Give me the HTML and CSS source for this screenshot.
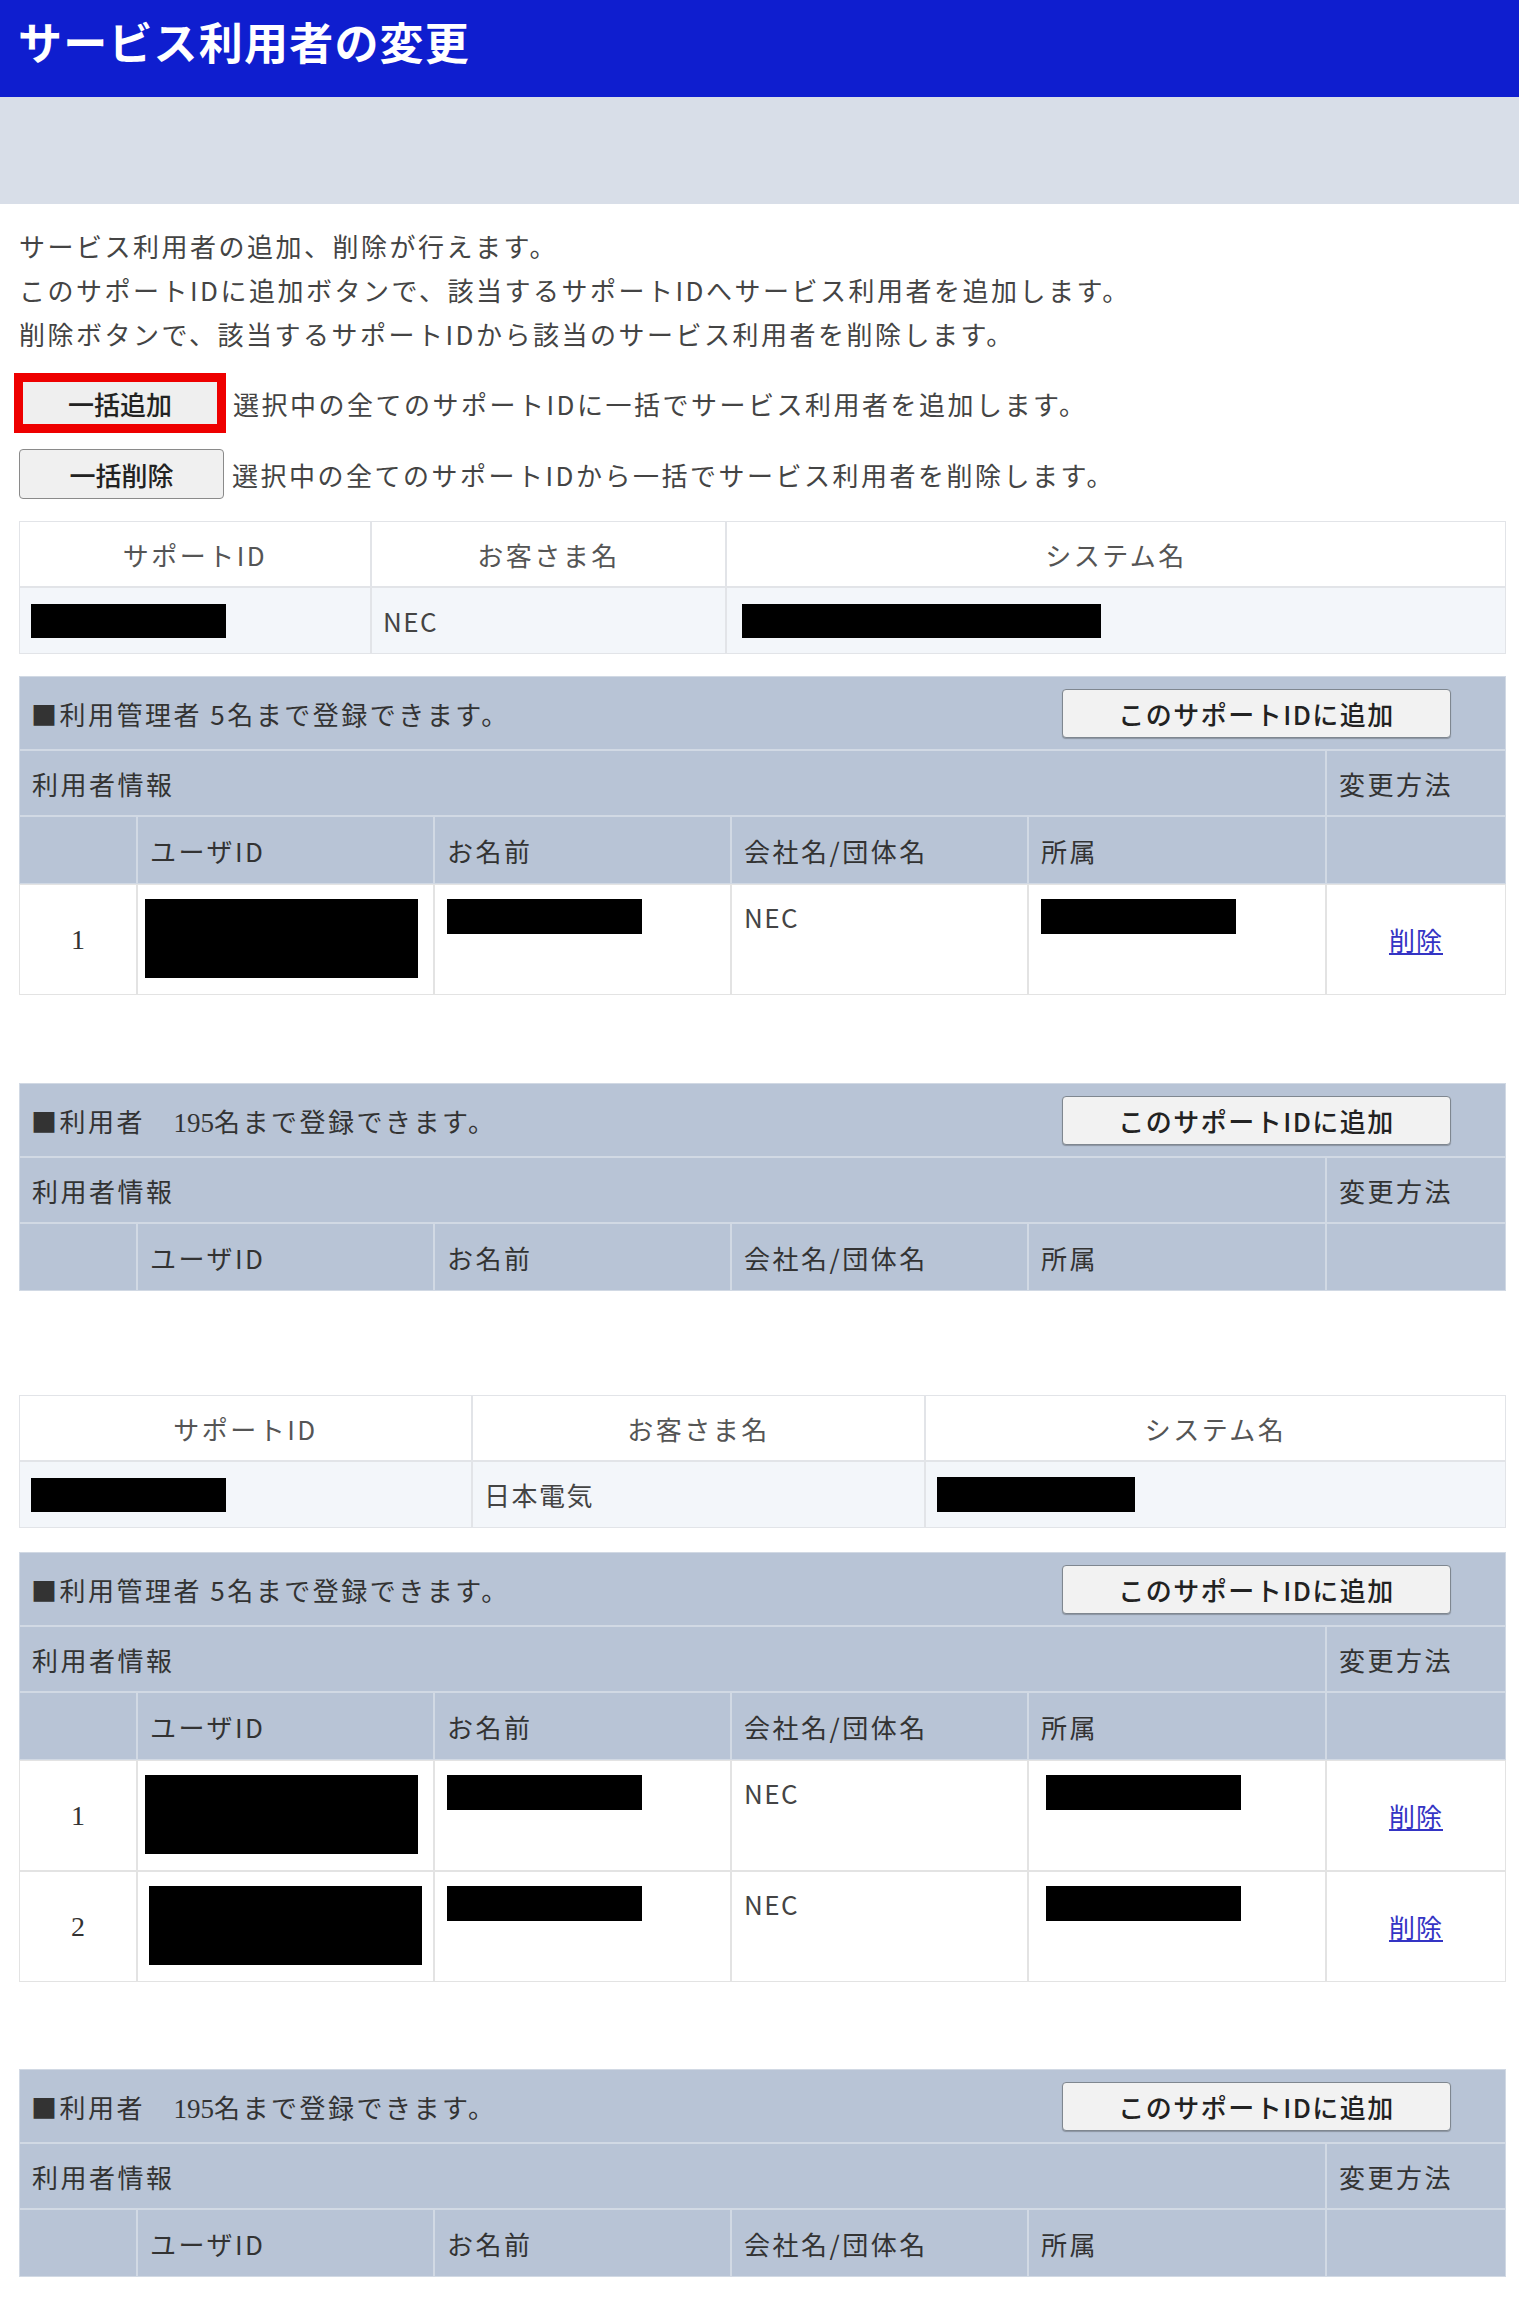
FILE: index.html
```html
<!DOCTYPE html>
<html lang="ja">
<head>
<meta charset="utf-8">
<title>サービス利用者の変更</title>
<link rel="stylesheet" href="styles.css">
</head>
<body>
<header class="page-header"><h1 class="page-title">サービス利用者の変更</h1></header>
<div class="sub-band"></div>
<main class="content">
  <div class="intro">
    <p>サービス利用者の追加、削除が行えます。</p>
    <p>このサポートIDに追加ボタンで、該当するサポートIDへサービス利用者を追加します。</p>
    <p>削除ボタンで、該当するサポートIDから該当のサービス利用者を削除します。</p>
  </div>
  <div class="bulk-row bulk-add">
    <button class="btn-bulk btn-highlight" type="button">一括追加</button>
    <span class="bulk-desc">選択中の全てのサポートIDに一括でサービス利用者を追加します。</span>
  </div>
  <div class="bulk-row bulk-del">
    <button class="btn-bulk" type="button">一括削除</button>
    <span class="bulk-desc">選択中の全てのサポートIDから一括でサービス利用者を削除します。</span>
  </div>

  <!-- group 1 -->
  <div class="info info-a">
    <div class="info-h">サポートID</div>
    <div class="info-h">お客さま名</div>
    <div class="info-h">システム名</div>
    <div class="info-d"><span class="redact r-sid"></span></div>
    <div class="info-d">NEC</div>
    <div class="info-d"><span class="redact r-sys-long"></span></div>
  </div>

  <div class="block block-admin">
    <div class="b-title"><span>■利用管理者 5名まで登録できます。</span><button class="btn-add" type="button">このサポートIDに追加</button></div>
    <div class="b-h b-info">利用者情報</div>
    <div class="b-h">変更方法</div>
    <div class="b-h b-col"></div>
    <div class="b-h b-col">ユーザID</div>
    <div class="b-h b-col">お名前</div>
    <div class="b-h b-col">会社名/団体名</div>
    <div class="b-h b-col">所属</div>
    <div class="b-h b-col"></div>
    <div class="b-d b-num">1</div>
    <div class="b-d b-uid"><span class="redact r-uid"></span></div>
    <div class="b-d"><span class="redact r-name"></span></div>
    <div class="b-d">NEC</div>
    <div class="b-d"><span class="redact r-dept"></span></div>
    <div class="b-d b-act"><a href="#" class="del-link">削除</a></div>
  </div>

  <div class="block block-users">
    <div class="b-title"><span>■利用者　<span class="num">195</span>名まで登録できます。</span><button class="btn-add" type="button">このサポートIDに追加</button></div>
    <div class="b-h b-info">利用者情報</div>
    <div class="b-h">変更方法</div>
    <div class="b-h b-col"></div>
    <div class="b-h b-col">ユーザID</div>
    <div class="b-h b-col">お名前</div>
    <div class="b-h b-col">会社名/団体名</div>
    <div class="b-h b-col">所属</div>
    <div class="b-h b-col"></div>
  </div>

  <!-- group 2 -->
  <div class="info info-b">
    <div class="info-h">サポートID</div>
    <div class="info-h">お客さま名</div>
    <div class="info-h">システム名</div>
    <div class="info-d"><span class="redact r-sid"></span></div>
    <div class="info-d">日本電気</div>
    <div class="info-d"><span class="redact r-sys-short"></span></div>
  </div>

  <div class="block block-admin block-admin2">
    <div class="b-title"><span>■利用管理者 5名まで登録できます。</span><button class="btn-add" type="button">このサポートIDに追加</button></div>
    <div class="b-h b-info">利用者情報</div>
    <div class="b-h">変更方法</div>
    <div class="b-h b-col"></div>
    <div class="b-h b-col">ユーザID</div>
    <div class="b-h b-col">お名前</div>
    <div class="b-h b-col">会社名/団体名</div>
    <div class="b-h b-col">所属</div>
    <div class="b-h b-col"></div>
    <div class="b-d b-num">1</div>
    <div class="b-d b-uid"><span class="redact r-uid"></span></div>
    <div class="b-d"><span class="redact r-name"></span></div>
    <div class="b-d">NEC</div>
    <div class="b-d b-dept2"><span class="redact r-dept"></span></div>
    <div class="b-d b-act"><a href="#" class="del-link">削除</a></div>
    <div class="b-d b-num">2</div>
    <div class="b-d b-uid b-uid2"><span class="redact r-uid"></span></div>
    <div class="b-d"><span class="redact r-name"></span></div>
    <div class="b-d">NEC</div>
    <div class="b-d b-dept2"><span class="redact r-dept"></span></div>
    <div class="b-d b-act"><a href="#" class="del-link">削除</a></div>
  </div>

  <div class="block block-users block-users2">
    <div class="b-title"><span>■利用者　<span class="num">195</span>名まで登録できます。</span><button class="btn-add" type="button">このサポートIDに追加</button></div>
    <div class="b-h b-info">利用者情報</div>
    <div class="b-h">変更方法</div>
    <div class="b-h b-col"></div>
    <div class="b-h b-col">ユーザID</div>
    <div class="b-h b-col">お名前</div>
    <div class="b-h b-col">会社名/団体名</div>
    <div class="b-h b-col">所属</div>
    <div class="b-h b-col"></div>
  </div>
</main>
</body>
</html>
```

FILE: styles.css
```css
* { box-sizing: border-box; }

html, body {
  margin: 0;
  padding: 0;
  background: #ffffff;
}

body {
  font-family: "Noto Sans CJK JP", "Noto Sans", sans-serif;
  font-size: 26px;
  color: #3a3a3a;
  letter-spacing: 2.5px;
}

.page-header {
  height: 97px;
  background: #0f1ecf;
  display: flex;
  align-items: center;
  padding: 0 0 16px 18px;
}

.page-title {
  margin: 0;
  color: #ffffff;
  font-size: 44px;
  font-weight: 700;
  letter-spacing: 1.2px;
  line-height: 1;
}

.sub-band {
  height: 107px;
  background: #d8dee8;
}

.content {
  padding: 0 13px 38px 19px;
}

.intro {
  margin-top: 20px;
}

.intro p {
  margin: 0;
  line-height: 44px;
  color: #444;
}

.bulk-row {
  display: flex;
  align-items: center;
}

.bulk-add {
  margin-top: 17px;
  margin-left: -5px;
  height: 60px;
}

.bulk-del {
  margin-top: 16px;
  height: 50px;
}

.btn-bulk {
  font-family: "Noto Sans CJK JP", sans-serif;
  font-size: 26px;
  font-weight: 500;
  color: #222;
  letter-spacing: 0;
  width: 205px;
  height: 50px;
  background: #f0f0f0;
  border: 1px solid #8a8a8a;
  border-radius: 4px;
  padding: 0;
}

.btn-highlight {
  width: 212px;
  height: 60px;
  border: 9px solid #ee0000;
  border-radius: 0;
  background: #efefef;
}

.bulk-desc {
  margin-left: 7px;
  color: #444;
}

.bulk-del .bulk-desc {
  margin-left: 8px;
}

/* support id info tables */
.info {
  display: grid;
  width: 1487px;
  margin-top: 22px;
}

.info-a { grid-template-columns: 352px 355px 780px; }
.info-b { grid-template-columns: 453px 453px 581px; margin-top: 104px; }

.info-h, .info-d {
  border: 1px solid #e2e4e8;
  display: flex;
  align-items: center;
}

.info-h {
  height: 66px;
  justify-content: center;
  background: #ffffff;
  color: #555;
}

.info-d {
  height: 67px;
  background: #f3f6fa;
  padding: 0 11px;
  color: #444;
  letter-spacing: 1.5px;
}

.redact {
  display: inline-block;
  background: #000;
}

.r-sid { width: 195px; height: 34px; }
.r-sys-long { width: 359px; height: 34px; margin-left: 4px; }
.r-sys-short { width: 198px; height: 35px; }
.r-uid { width: 273px; height: 79px; }
.r-name { width: 195px; height: 35px; }
.r-dept { width: 195px; height: 35px; }

/* user blocks */
.block {
  display: grid;
  grid-template-columns: 118px 297px 297px 297px 298px 180px;
  width: 1487px;
  margin-top: 22px;
}

.block-users { margin-top: 88px; }
.block-admin2 { margin-top: 24px; }
.block-users2 { margin-top: 87px; }

.b-title, .b-h {
  background: #b8c4d6;
  border: 1px solid #d1d9e4;
  color: #333;
}

.b-title {
  grid-column: 1 / -1;
  height: 74px;
  display: flex;
  align-items: center;
  justify-content: space-between;
  padding: 0 54px 0 11px;
}

.num {
  font-family: "Liberation Serif", serif;
  letter-spacing: 0;
  font-size: 27px;
}

.btn-add {
  font-family: "Noto Sans CJK JP", sans-serif;
  font-size: 26px;
  font-weight: 500;
  letter-spacing: 1.5px;
  color: #222;
  width: 389px;
  height: 49px;
  background: #f2f2f2;
  border: 1px solid #7f8790;
  border-radius: 4px;
  box-shadow: 0 1px 1px rgba(0,0,0,0.25);
  padding: 0;
}

.b-h {
  height: 66px;
  display: flex;
  align-items: center;
  padding: 0 12px;
}

.b-info { grid-column: 1 / 6; }

.b-col { height: 68px; }

.b-d {
  height: 111px;
  background: #ffffff;
  border: 1px solid #e3e3e3;
  padding: 14px 12px 0 12px;
  color: #444;
  line-height: 36px;
  letter-spacing: 1.5px;
}

.b-d .redact { vertical-align: top; }

.b-uid { padding-left: 7px; }
.b-uid2 { padding-left: 11px; }
.b-dept2 { padding-left: 17px; }

.b-num {
  padding: 0;
  display: flex;
  align-items: center;
  justify-content: center;
  font-family: "Liberation Serif", serif;
  font-size: 28px;
  color: #333;
  letter-spacing: 0;
}

.b-act {
  padding: 0;
  display: flex;
  align-items: center;
  justify-content: center;
}

.del-link {
  color: #3434c4;
  text-decoration: underline;
  letter-spacing: 1px;
}
```
